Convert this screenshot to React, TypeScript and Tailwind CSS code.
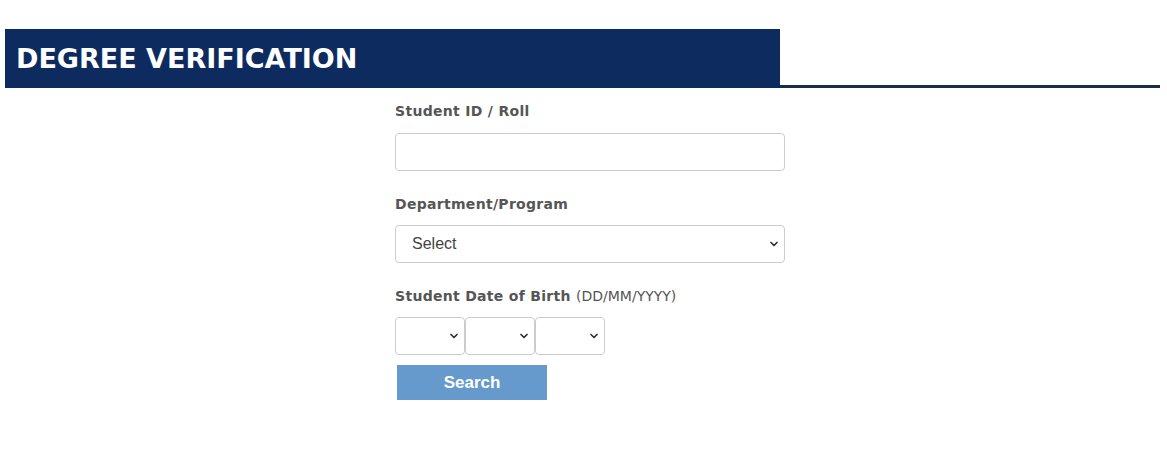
import { ChevronDown } from "lucide-react";

const labelCls = "block text-[14px] leading-[20px] font-bold tracking-[0.3px] text-[#555] [font-family:'DejaVu_Sans',Verdana,sans-serif]";
const boxCls = "border border-[#ccc] rounded-[4px] bg-white";

function FakeSelect({ width, text }: { width: string; text?: string }) {
  return (
    <div className={`${boxCls} ${width} h-[38px] flex items-center justify-between pl-4 pr-[4px]`}>
      <span className="text-[16px] text-[#444] [font-family:'Liberation_Sans',Arial,sans-serif]">{text}</span>
      <ChevronDown size={12} strokeWidth={3.5} className="text-[#333]" />
    </div>
  );
}

export default function App() {
  return (
    <div className="w-[1167px] h-[451px] bg-white pt-[29px]">
      {/* header */}
      <div className="flex pl-[5px] pr-[7px]">
        <div className="w-[775px] h-[59px] bg-[#0e2b5f] flex items-center pl-[11px] pt-[1px]">
          <h1 className="text-white text-[27px] font-bold tracking-[0px] [font-family:'DejaVu_Sans',Verdana,sans-serif]">
            DEGREE VERIFICATION
          </h1>
        </div>
        <div className="flex-1 flex flex-col justify-end">
          <div className="h-[3px] bg-[#1b2b48]" />
        </div>
      </div>

      {/* form */}
      <div className="pl-[395px] pt-[13px] w-[785px]">
        <label className={labelCls}>Student ID / Roll</label>
        <div className={`${boxCls} w-[390px] h-[38px] mt-[12px]`} />

        <label className={`${labelCls} mt-[23px]`}>Department/Program</label>
        <div className="mt-[11px]">
          <FakeSelect width="w-[390px]" text="Select" />
        </div>

        <label className={`${labelCls} mt-[23px]`}>
          Student Date of Birth{" "}
          <span className="font-normal tracking-normal">(DD/MM/YYYY)</span>
        </label>
        <div className="flex mt-[11px]">
          <FakeSelect width="w-[70px]" />
          <FakeSelect width="w-[70px]" />
          <FakeSelect width="w-[70px]" />
        </div>

        <button className="block mt-[10px] ml-[2px] w-[150px] h-[35px] bg-[#6699cc] text-white text-[17px] font-bold [font-family:'Liberation_Sans',Arial,sans-serif]">
          Search
        </button>
      </div>
    </div>
  );
}
